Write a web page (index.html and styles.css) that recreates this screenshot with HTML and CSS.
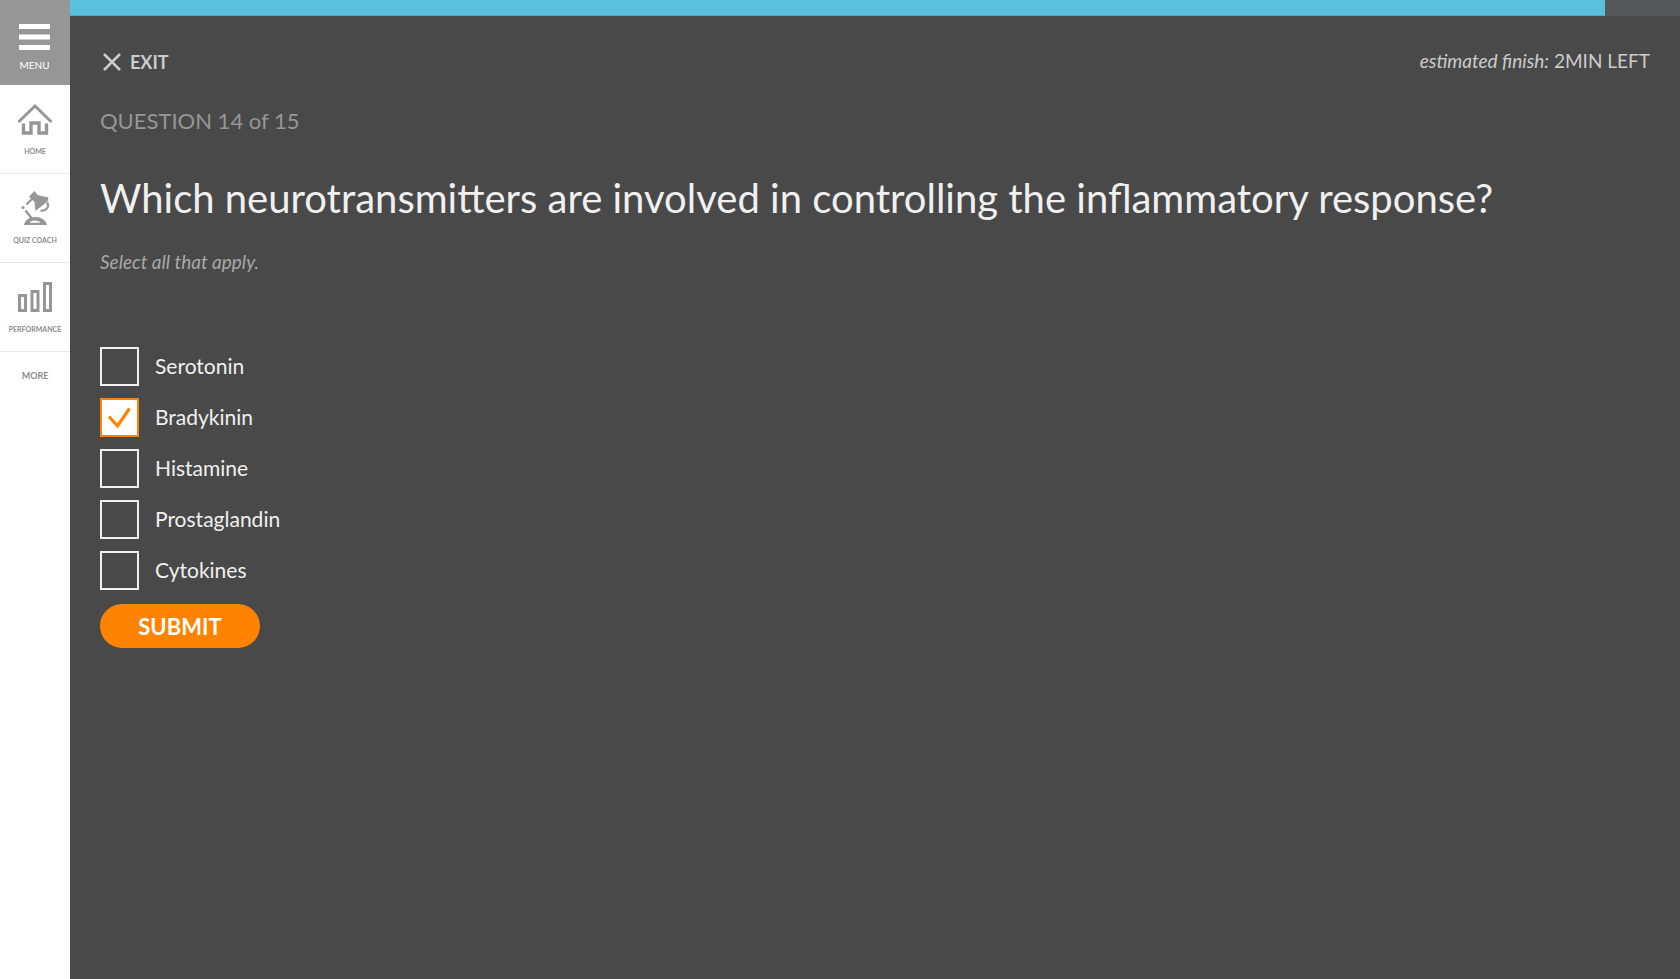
FILE: index.html
```html
<!DOCTYPE html>
<html lang="en">
<head>
<meta charset="utf-8">
<title>Quiz</title>
<link rel="stylesheet" href="styles.css">
</head>
<body>
<div class="app">
  <nav class="sidebar" aria-label="Main">
    <button class="menu" type="button">
      <svg class="menu-icon" width="31" height="27" viewBox="0 0 31 27" aria-hidden="true"><path d="M0 0h31v5H0zM0 10.500h31v5H0zM0 21h31v5H0z" fill="#fff"/></svg>
      <span>MENU</span>
    </button>
    <a class="nav-item" href="#home">
      <svg width="36" height="36" viewBox="0 0 36 36" aria-hidden="true"><g fill="none" stroke="#969696" stroke-width="3"><path d="M1.500 20 18 4l16.500 16"/><path d="M6.500 21.500v9.500H14V21h8v10h7.500v-9.500" stroke-width="3.400"/></g></svg>
      <span>HOME</span>
    </a>
    <a class="nav-item" href="#coach">
      <svg width="36" height="36" viewBox="0 0 36 36" aria-hidden="true"><g fill="#969696"><path d="M12 5.500 17.500 0l3 4 11 2.500-1 4L18.500 20l-1-9z"/><circle cx="6" cy="16.500" r="1.600"/><path d="M7 34c1-5 5-8 11-8s11 3 12 8z"/></g><path d="M12.500 31.800c2-3 9-3 11 0z" fill="#fff"/><g fill="none" stroke="#969696" stroke-width="2.200"><path d="m9.500 13.500 6-6M8.500 19.500l6 7.500"/><path d="M30 11.500c3 4-1 9-6.500 8"/></g></svg>
      <span>QUIZ COACH</span>
    </a>
    <a class="nav-item" href="#performance">
      <svg width="36" height="36" viewBox="0 0 36 36" aria-hidden="true"><path d="M2.500 15.500h6v15h-6zM15 11.500h6v19h-6zM27.500 3.500h6v27h-6z" fill="none" stroke="#969696" stroke-width="3"/></svg>
      <span>PERFORMANCE</span>
    </a>
    <a class="more" href="#more">MORE</a>
  </nav>
  <main class="quiz">
    <div class="progress" role="progressbar" aria-label="Quiz progress" aria-valuemin="0" aria-valuemax="15" aria-valuenow="14"><div class="progress-fill" style="width:95.350%"></div></div>
    <div class="content">
      <header class="top">
        <a class="exit" href="#exit">
          <svg width="20" height="20" viewBox="0 0 20 20" aria-hidden="true"><path d="m2 2 16 16M18 2 2 18" fill="none" stroke="#ccc" stroke-width="2.500"/></svg>
          <span>EXIT</span>
        </a>
        <p class="estimate"><em>estimated finish:</em> 2MIN LEFT</p>
      </header>
      <p class="counter">QUESTION 14 of 15</p>
      <h1 class="question">Which neurotransmitters are involved in controlling the inflammatory response?</h1>
      <p class="hint">Select all that apply.</p>
      <form class="answers">
        <label class="answer"><input type="checkbox"><span>Serotonin</span></label>
        <label class="answer"><input type="checkbox" checked><svg class="tick" width="39" height="39" viewBox="0 0 39 39" aria-hidden="true"><path d="m9 18.500 8.500 9.500L29.500 10.500" fill="none" stroke="#ff8200" stroke-width="3.200"/></svg><span>Bradykinin</span></label>
        <label class="answer"><input type="checkbox"><span>Histamine</span></label>
        <label class="answer"><input type="checkbox"><span>Prostaglandin</span></label>
        <label class="answer"><input type="checkbox"><span>Cytokines</span></label>
        <button class="submit" type="button">SUBMIT</button>
      </form>
    </div>
  </main>
</div>
</body>
</html>
```
FILE: styles.css
```css
* { box-sizing: border-box; }
body {
  margin: 0;
  background: #494949;
  color: #f0f0f0;
  font-family: Lato, "Open Sans", sans-serif;
}
p, h1 { margin: 0; }
a { color: inherit; text-decoration: none; }
button { border: 0; font-family: inherit; cursor: pointer; }

.app { display: flex; min-height: 100vh; }

.sidebar {
  display: flex;
  flex-direction: column;
  flex: none;
  width: 70px;
  background: #fff;
  color: #8c8c8c;
}
.menu {
  display: flex;
  flex-direction: column;
  align-items: center;
  gap: 8px;
  height: 85px;
  padding: 24px 1px 0 0;
  background: #969696;
  color: #fff;
  font-size: 10px;
  line-height: 12px;
}
.nav-item {
  display: flex;
  flex-direction: column;
  align-items: center;
  gap: 8px;
  padding: 17px 0 16px;
  border-bottom: 1px solid #e8e8e8;
  font-size: 7px;
  font-weight: 700;
  line-height: 11px;
}
.more {
  padding: 17px 0;
  font-size: 9px;
  font-weight: 700;
  line-height: 14px;
  text-align: center;
}

.quiz { flex: 1; min-width: 0; }
.progress { height: 16px; background: #555658; }
.progress-fill {
  height: 100%;
  background: #5bc0de;
  border-bottom: 1px solid #4fa9c4;
}
.content { padding: 32px 30px; }
.top {
  display: flex;
  justify-content: space-between;
  align-items: center;
  height: 28px;
}
.exit {
  display: flex;
  align-items: center;
  gap: 8px;
  padding-left: 2px;
  color: #ccc;
  font-size: 18px;
  font-weight: 700;
}
.estimate { color: #ccc; font-size: 19px; line-height: 24px; padding-bottom: 2px; }
.counter {
  margin-top: 30px;
  color: #969696;
  font-size: 22px;
  line-height: 30px;
}
.question {
  margin-top: 36px;
  font-size: 40px;
  font-weight: 400;
  line-height: 52px;
}
.hint {
  margin-top: 25px;
  color: #a8a8a8;
  font-size: 19px;
  font-style: italic;
  line-height: 26px;
}
.answers {
  display: flex;
  flex-direction: column;
  align-items: flex-start;
  gap: 12px;
  margin-top: 72px;
}
.answer {
  position: relative;
  display: flex;
  align-items: center;
  gap: 16px;
  font-size: 21px;
  line-height: 26px;
}
.answer span { padding-bottom: 2px; }
.answer input {
  appearance: none;
  width: 39px;
  height: 39px;
  margin: 0;
  border: 2px solid #f0f0f0;
}
.answer input:checked { border-color: #ff8200; background: #fff; }
.tick { position: absolute; top: 0; left: 0; pointer-events: none; }
.submit {
  min-width: 160px;
  height: 44px;
  margin-top: 2px;
  padding: 0 32px;
  border-radius: 22px;
  background: #ff8200;
  color: #fff;
  font-size: 22px;
  font-weight: 700;
}
```
